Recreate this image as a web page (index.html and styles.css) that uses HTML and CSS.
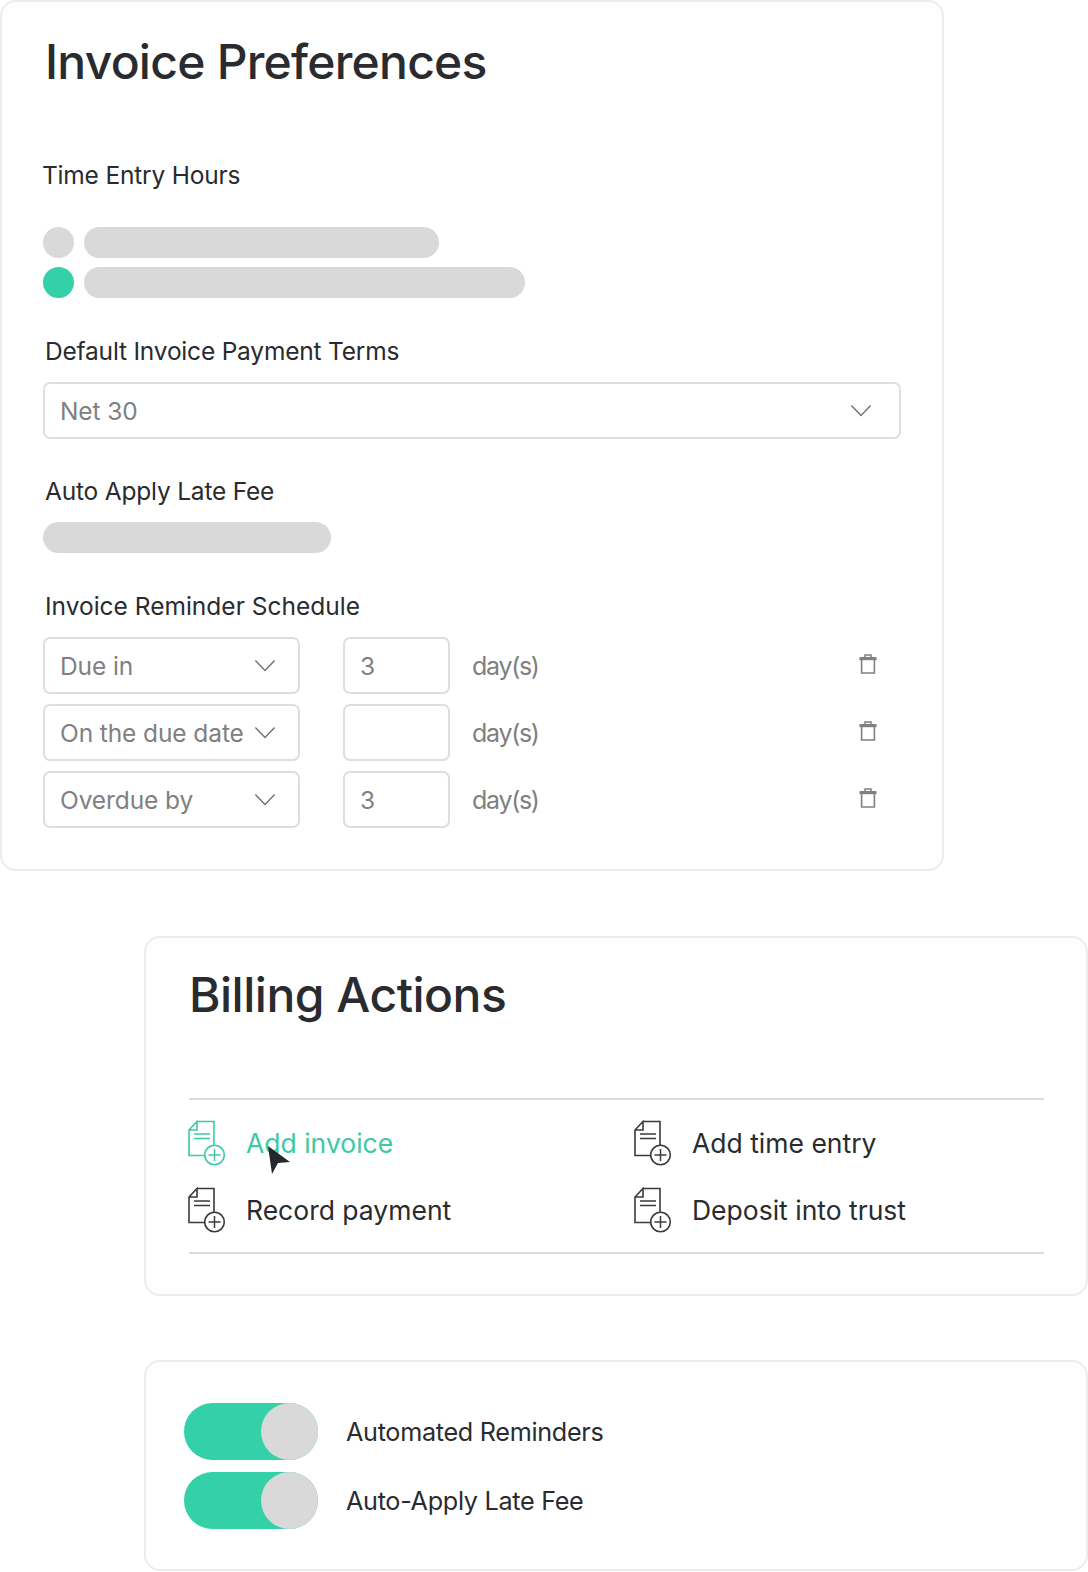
FILE: index.html
```html
<!DOCTYPE html>
<html lang="en">

<head>
  <meta charset="UTF-8">
  <title>Invoice Preferences</title>
  <link rel="stylesheet" href="styles.css">
</head>

<body>
  <svg class="defs" width="0" height="0">
    <symbol id="doc" viewBox="0 0 38 46">
      <path d="M9 1.500H26V26M16 35.500H1V10L9 1.500V10H1" fill="none" stroke="currentColor" stroke-width="1.600" />
      <path d="M6 14H22M6 18.500H22" fill="none" stroke="currentColor" stroke-width="1.400" />
      <circle cx="26.500" cy="35" r="9.800" fill="#fff" stroke="currentColor" stroke-width="1.600" />
      <path d="M26.500 29V41M20.500 35H32.500" fill="none" stroke="currentColor" stroke-width="1.500" />
    </symbol>
    <symbol id="chevron" viewBox="0 0 24 14">
      <path d="M1.500 1.500L12 12.500L22.500 1.500" fill="none" stroke="currentColor" stroke-width="1.500" />
    </symbol>
    <symbol id="trash" viewBox="0 0 18 20">
      <path d="M6 3V1H12V3" fill="none" stroke="currentColor" stroke-width="1.500" />
      <rect x="0.500" y="3" width="17" height="3.200" fill="currentColor" />
      <path d="M2.600 6V19H15.400V6" fill="none" stroke="currentColor" stroke-width="1.600" />
    </symbol>
  </svg>

  <section class="card prefs">
    <h1>Invoice Preferences</h1>

    <div class="label flush">Time Entry Hours</div>
    <div class="radio-row">
      <span class="dot"></span>
      <span class="bar bar-short"></span>
    </div>
    <div class="radio-row">
      <span class="dot on"></span>
      <span class="bar bar-long"></span>
    </div>

    <div class="label terms-label">Default Invoice Payment Terms</div>
    <div class="select wide">
      <span>Net 30</span>
      <svg class="chevron"><use href="#chevron" /></svg>
    </div>

    <div class="label fee-label">Auto Apply Late Fee</div>
    <span class="bar bar-fee"></span>

    <div class="label schedule-label">Invoice Reminder Schedule</div>
    <div class="schedule">
      <div class="schedule-row">
        <div class="select small"><span>Due in</span><svg class="chevron"><use href="#chevron" /></svg></div>
        <div class="number">3</div>
        <span class="unit">day(s)</span>
        <svg class="trash"><use href="#trash" /></svg>
      </div>
      <div class="schedule-row">
        <div class="select small"><span>On the due date</span><svg class="chevron"><use href="#chevron" /></svg></div>
        <div class="number"></div>
        <span class="unit">day(s)</span>
        <svg class="trash"><use href="#trash" /></svg>
      </div>
      <div class="schedule-row">
        <div class="select small"><span>Overdue by</span><svg class="chevron"><use href="#chevron" /></svg></div>
        <div class="number">3</div>
        <span class="unit">day(s)</span>
        <svg class="trash"><use href="#trash" /></svg>
      </div>
    </div>
  </section>

  <section class="card actions">
    <h1>Billing Actions</h1>
    <div class="action-grid">
      <div class="action active">
        <svg class="doc"><use href="#doc" /></svg>
        <span>Add invoice</span>
        <svg class="cursor" viewBox="0 0 22 28">
          <path d="M0 0L22 16L10 17L4 28Z" fill="#24272b" />
        </svg>
      </div>
      <div class="action">
        <svg class="doc"><use href="#doc" /></svg>
        <span>Add time entry</span>
      </div>
      <div class="action">
        <svg class="doc"><use href="#doc" /></svg>
        <span>Record payment</span>
      </div>
      <div class="action">
        <svg class="doc"><use href="#doc" /></svg>
        <span>Deposit into trust</span>
      </div>
    </div>
  </section>

  <section class="card toggles">
    <div class="toggle-row">
      <span class="toggle"></span>
      <span class="toggle-label">Automated Reminders</span>
    </div>
    <div class="toggle-row">
      <span class="toggle"></span>
      <span class="toggle-label">Auto-Apply Late Fee</span>
    </div>
  </section>
</body>

</html>
```

FILE: styles.css
```css
* {
  box-sizing: border-box;
}

body {
  --green: #34d1a8;
  --grey: #d9d9d9;
  --ink: #2a2b2e;
  margin: 0;
  width: 1088px;
  height: 1572px;
  overflow: hidden;
  font-family: Inter, "Liberation Sans", sans-serif;
  color: var(--ink);
  background: #fff;
}

.defs {
  position: absolute;
}

.card {
  border: 2px solid #ececec;
  border-radius: 16px;
  background: #fff;
}

h1 {
  margin: 0;
  font-size: 48px;
  line-height: 56px;
  font-weight: 500;
  letter-spacing: -0.75px;
}

.label {
  font-size: 24.500px;
  line-height: 30px;
  letter-spacing: -0.2px;
  padding-left: 2px;
}

.label.flush {
  padding-left: 0;
  margin-left: -1px;
  margin-top: 70px;
  margin-bottom: 37px;
}

.prefs {
  width: 944px;
  height: 871px;
  padding: 32px 41px 0;
}

.prefs h1 {
  padding-left: 2px;
}

.radio-row {
  display: flex;
  gap: 10px;
  margin-bottom: 9px;
}

.radio-row + .radio-row {
  margin-bottom: 10px;
}

.dot {
  width: 31px;
  height: 31px;
  border-radius: 50%;
  background: var(--grey);
}

.dot.on {
  background: var(--green);
}

.bar {
  display: block;
  height: 31px;
  border-radius: 16px;
  background: var(--grey);
}

.bar-short {
  width: 355px;
}

.bar-long {
  width: 441px;
}

.bar-fee {
  width: 288px;
}

.terms-label {
  margin-top: 38px;
  margin-bottom: 16px;
}

.select,
.number {
  display: flex;
  align-items: center;
  height: 57px;
  border: 2px solid #dedede;
  border-radius: 7px;
  font-size: 24.500px;
  letter-spacing: -0.1px;
  color: #808080;
  padding-left: 15px;
}

.select {
  justify-content: space-between;
  padding-right: 22px;
}

.wide {
  width: 858px;
  padding-right: 27px;
}

.small {
  width: 257px;
}

.chevron {
  width: 22px;
  height: 13px;
  color: #707070;
}

.fee-label {
  margin-top: 37px;
  margin-bottom: 16px;
}

.schedule-label {
  margin-top: 38px;
  margin-bottom: 16px;
  letter-spacing: 0;
}

.schedule {
  display: flex;
  flex-direction: column;
  gap: 10px;
}

.schedule-row {
  display: flex;
  align-items: center;
}

.number {
  width: 107px;
  margin-left: 43px;
}

.unit {
  margin-left: 22px;
  font-size: 25px;
  letter-spacing: -1.3px;
  color: #808080;
}

.trash {
  width: 18px;
  height: 20px;
  margin-left: auto;
  margin-right: 24px;
  margin-top: -4px;
  color: #808080;
}

.actions {
  width: 944px;
  height: 360px;
  margin: 65px 0 0 144px;
  padding: 29px 42px 0 43px;
}

.actions h1 {
  letter-spacing: -0.5px;
}

.action-grid {
  display: grid;
  grid-template-columns: 446px 1fr;
  grid-auto-rows: 66.500px;
  margin-top: 75px;
  padding: 10px 0 9px;
  border-top: 2px solid #dcdcdc;
  border-bottom: 2px solid #dcdcdc;
}

.action {
  position: relative;
  display: flex;
  align-items: center;
  gap: 20px;
  font-size: 26.500px;
}

.action.active {
  color: #3ec8a4;
}

.doc {
  width: 38px;
  height: 46px;
  margin-left: -1px;
  color: #3a3b3d;
}

.active .doc {
  color: #3ec8a4;
}

.cursor {
  position: absolute;
  left: 79px;
  top: 36px;
  width: 22px;
  height: 28px;
}

.toggles {
  width: 944px;
  height: 211px;
  margin: 64px 0 0 144px;
  padding: 41px 38px 0;
}

.toggle-row {
  display: flex;
  align-items: center;
  gap: 28px;
  margin-bottom: 12px;
  font-size: 25.200px;
  letter-spacing: -0.3px;
}

.toggle {
  position: relative;
  width: 134px;
  height: 57px;
  border-radius: 29px;
  background: var(--green);
}

/* knob */
.toggle::after {
  content: '';
  position: absolute;
  right: 0;
  top: 0;
  width: 57px;
  height: 57px;
  border-radius: 50%;
  background: var(--grey);
}
```
